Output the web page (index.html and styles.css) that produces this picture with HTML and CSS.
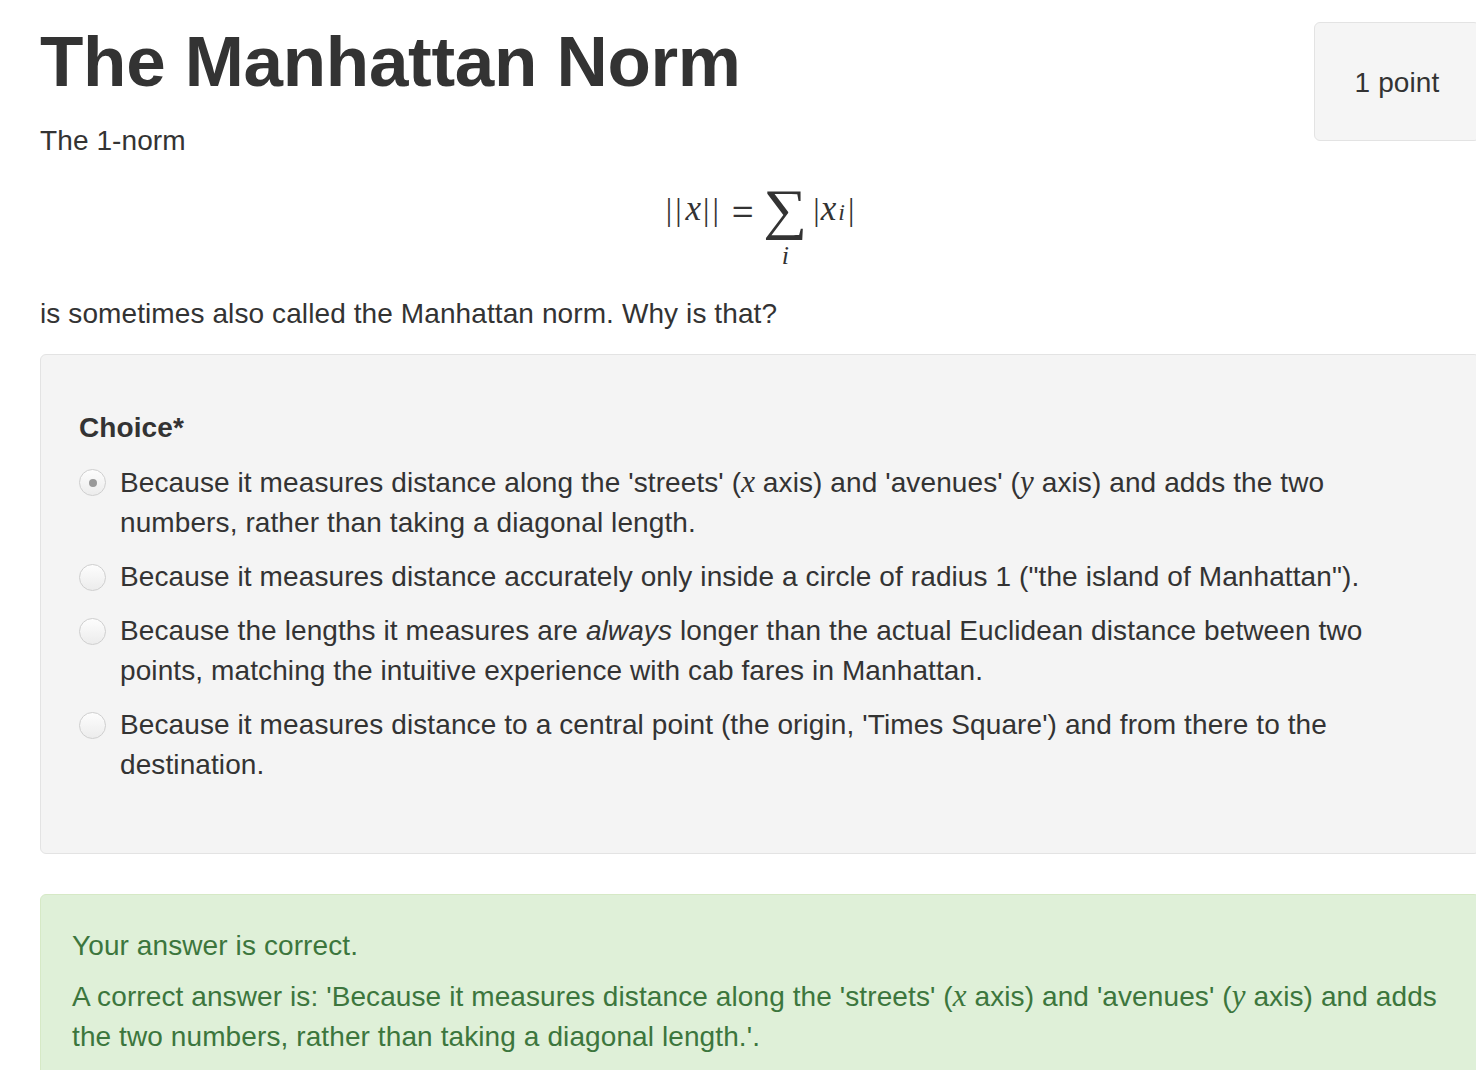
FILE: index.html
```html
<!DOCTYPE html>
<html>
<head>
<meta charset="utf-8">
<link rel="stylesheet" href="styles.css">
</head>
<body>
<div class="que">
  <div class="head">
    <h2 class="title">The Manhattan Norm</h2>
    <div class="info">1 point</div>
  </div>
  <p class="intro">The 1-norm</p>
  <div class="formula">
    <span class="bars">||</span><span class="mi big">x</span><span class="bars">||</span>
    <span class="eq">=</span>
    <span class="sum"><span class="sigma">∑</span><span class="under mi">i</span></span>
    <span class="bar">|</span><span class="mi big">x</span><sub class="mi sub">i</sub><span class="bar">|</span>
  </div>
  <p class="why">is sometimes also called the Manhattan norm. Why is that?</p>
  <div class="formulation">
    <div class="legend">Choice*</div>
    <div class="options">
      <div class="option">
        <span class="radio checked"></span>
        <span class="label">Because it measures distance along the 'streets' (<i class="m">x</i> axis) and 'avenues' (<i class="m">y</i> axis) and adds the two numbers, rather than taking a diagonal length.</span>
      </div>
      <div class="option">
        <span class="radio"></span>
        <span class="label">Because it measures distance accurately only inside a circle of radius 1 ("the island of Manhattan").</span>
      </div>
      <div class="option">
        <span class="radio"></span>
        <span class="label">Because the lengths it measures are <em>always</em> longer than the actual Euclidean distance between two points, matching the intuitive experience with cab fares in Manhattan.</span>
      </div>
      <div class="option">
        <span class="radio"></span>
        <span class="label">Because it measures distance to a central point (the origin, 'Times Square') and from there to the destination.</span>
      </div>
    </div>
  </div>
  <div class="outcome">
    <div class="feedback">Your answer is correct.</div>
    <div class="right">A correct answer is: 'Because it measures distance along the 'streets' (<i class="m">x</i> axis) and 'avenues' (<i class="m">y</i> axis) and adds the two numbers, rather than taking a diagonal length.'.</div>
  </div>
</div>
</body>
</html>
```
FILE: styles.css
```css
html, body {
  margin: 0;
  padding: 0;
  overflow: hidden;
  background: #fff;
}
body {
  font-family: "Liberation Sans", Arial, Helvetica, sans-serif;
  font-size: 28px;
  line-height: 40px;
  letter-spacing: 0.1px;
  color: #333;
}
.que {
  width: 1440px;
  padding-left: 40px;
}
.head {
  display: flex;
  justify-content: space-between;
  align-items: flex-start;
}
.title {
  margin: 0;
  padding-top: 22px;
  font-size: 71px;
  line-height: 80px;
  font-weight: bold;
  color: #333;
  letter-spacing: -0.3px;
}
.info {
  margin-top: 22px;
  width: 166px;
  height: 119px;
  box-sizing: border-box;
  background: #f5f5f5;
  border: 1px solid #e3e3e3;
  border-radius: 6px;
  display: flex;
  align-items: center;
  justify-content: center;
  font-size: 28px;
  padding-top: 2px;
}
.intro {
  margin: -20px 0 0 0;
}
.formula {
  display: flex;
  justify-content: center;
  align-items: baseline;
  font-family: "Liberation Serif", "Times New Roman", serif;
  font-size: 32px;
  line-height: 40px;
  margin-top: 18px;
  height: 82px;
  letter-spacing: 0;
}
.formula .mi {
  font-style: italic;
}
.formula .big {
  font-size: 35px;
  margin: 0 2px 0 1px;
}
.formula .bars {
  letter-spacing: 3px;
}
.formula .eq {
  margin: 0 12px 0 10px;
  font-size: 38px;
  -webkit-text-stroke: 0.4px #333;
  transform: translateY(5px);
}
.sum {
  display: inline-flex;
  flex-direction: column;
  align-items: center;
  margin-right: 8px;
}
.sigma {
  font-size: 56px;
  line-height: 44px;
  transform: translateY(8px) scaleX(1.1);
}
.under {
  font-size: 26px;
  line-height: 30px;
  margin-top: 18px;
}
.sub {
  font-size: 24px;
  line-height: 0;
  vertical-align: -6px;
  margin-right: 3px;
}
.why {
  margin: 33px 0 0 0;
}
.formulation {
  margin-top: 20px;
  background: #f4f4f4;
  border: 1px solid #e3e3e3;
  border-radius: 6px;
  padding: 53px 40px 68px 38px;
}
.legend {
  font-weight: bold;
  margin-bottom: 14px;
}
.options {
  display: flex;
  flex-direction: column;
  gap: 14px;
}
.option {
  display: flex;
  align-items: flex-start;
}
.radio {
  flex: none;
  width: 27px;
  height: 27px;
  margin: 7px 14px 0 0;
  border-radius: 50%;
  border: 1px solid #cfcfcf;
  box-sizing: border-box;
  background: linear-gradient(#fdfdfd, #ececec);
  position: relative;
}
.radio.checked::after {
  content: "";
  position: absolute;
  left: 9px;
  top: 9px;
  width: 8px;
  height: 8px;
  border-radius: 50%;
  background: #999;
}
.label {
  flex: 1;
  padding-right: 10px;
}
.m {
  font-family: "Liberation Serif", "Times New Roman", serif;
  font-style: italic;
  font-size: 31px;
}
.outcome {
  margin-top: 40px;
  background: #dff0d8;
  border: 1px solid #d6e9c6;
  border-radius: 6px;
  padding: 31px 32px 30px 31px;
  color: #3c763d;
  height: 300px;
}
.right {
  margin-top: 10px;
}
```
